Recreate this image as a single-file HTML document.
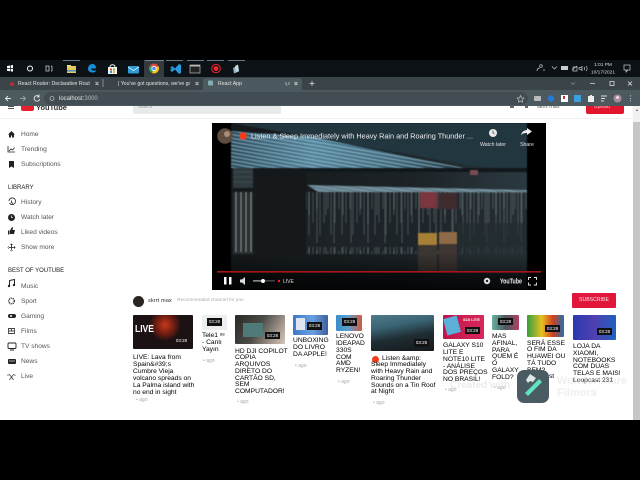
<!DOCTYPE html>
<html><head><meta charset="utf-8"><style>
*{margin:0;padding:0;box-sizing:border-box}
html,body{width:640px;height:480px;overflow:hidden;background:#000;font-family:"Liberation Sans",sans-serif}
#w{position:absolute;left:0;top:0;width:640px;height:480px;filter:blur(.3px);overflow:hidden}
.a{position:absolute;white-space:nowrap}
.s{position:absolute;left:21px;font-size:6.6px;color:#555;line-height:8px}
.h{position:absolute;left:8px;font-size:6px;color:#222;line-height:8px}
.th{position:absolute;border-radius:1px;overflow:hidden}
.d{position:absolute;background:#111;color:#fff;font-size:4.5px;width:15px;height:7.5px;line-height:7.5px;text-align:center}
.t{position:absolute;font-size:6.7px;line-height:6.75px;color:#000;white-space:pre-line}
.g{position:absolute;font-size:5px;color:#aaa;line-height:6px}
</style></head><body><div id="w">
<div class="a" style="left:0;top:60px;width:640px;height:17px;background:#0b1115"></div>
<div class="a" style="left:144px;top:60px;width:20px;height:17px;background:#333b40"></div>
<svg class="a" style="left:0;top:60px" width="640" height="17" viewBox="0 0 640 17">
<rect x="63" y="0" width="17" height=".7" fill="#8fa6b8"/><rect x="145" y="0" width="19" height=".7" fill="#8fa6b8"/><rect x="166" y="0" width="17" height=".7" fill="#8fa6b8"/><rect x="187" y="0" width="17" height=".7" fill="#8fa6b8"/><rect x="207" y="0" width="17" height=".7" fill="#8fa6b8"/><rect x="228" y="0" width="17" height=".7" fill="#8fa6b8"/>
<path d="M7 6l3-.5V8H7zM10.700 5.400L13 5V8h-2.300zM7 8.700h3v2.600l-3-.5zM10.700 8.700H13v3l-2.300-.4z" fill="#fff"/>
<circle cx="30" cy="8.500" r="2.500" fill="none" stroke="#fff" stroke-width="1"/>
<path d="M46 6h3v5h-3zM51 6h1M51 11h1M52 6v5" fill="none" stroke="#ccc" stroke-width=".8"/>
<rect x="67" y="6" width="9" height="7" fill="#e8c860"/><rect x="67" y="5" width="4" height="2" fill="#f2d878"/><rect x="67" y="10" width="9" height="1.500" fill="#4d90c0"/>
<path d="M88 9c0-3 2-5 4.500-5 2.500 0 3.500 2 3.500 4.500h-5c.2 2 2.500 2.500 4.500 1.500v2c-3 1.300-7.500.3-7.500-3z" fill="#1b8fd6"/>
<rect x="108" y="7" width="9" height="7" fill="#f5f5f5"/><path d="M110 7c0-3 5-3 5 0" fill="none" stroke="#eee"/><rect x="110" y="8.500" width="2" height="2" fill="#e04b2f"/><rect x="113" y="8.500" width="2" height="2" fill="#7db33c"/><rect x="110" y="11" width="2" height="2" fill="#2f9ad8"/><rect x="113" y="11" width="2" height="2" fill="#f0b429"/>
<rect x="128" y="6" width="11" height="7.500" rx="1" fill="#2f9ad8"/><path d="M128 7l5.500 3.500L139 7" fill="none" stroke="#d8effa" stroke-width=".8"/>
<circle cx="154" cy="8.500" r="5" fill="#dd4b3a"/><path d="M154 8.500l4.300-2.500A5 5 0 0 1 152 13z" fill="#f4c20d"/><path d="M154 8.500l-2 4.500A5 5 0 0 1 149.700 6z" fill="#2da55a"/><circle cx="154" cy="8.500" r="2.200" fill="#4a8df0" stroke="#fff" stroke-width=".8"/>
<path d="M170 8l2-2 3 2.500 4-4.500 2 1v8l-2 1-4-4.500-3 2.500-2-2 2-1.700z" fill="#2a9ae0"/>
<rect x="190" y="5" width="10" height="8" fill="#222" stroke="#bbb" stroke-width=".7"/><rect x="190" y="5" width="10" height="1.500" fill="#bbb"/>
<circle cx="216" cy="8.500" r="4.300" fill="none" stroke="#e23" stroke-width="1"/><circle cx="216" cy="8.500" r="2.500" fill="#e82a2a"/>
<path d="M233 8l5-2.500 1 6-5 2z" fill="#8db4c4"/><path d="M235 6l3-1.500 1 6-3 1.500z" fill="#c4d8e0"/>
<g fill="none" stroke="#ccc" stroke-width=".7"><circle cx="541" cy="6" r="1.300"/><path d="M537 11c0-2 1-3 3-3M543 10h2"/><path d="M552 6.500l2.500 2.500L557 6.500"/><path d="M572 10l5-4M573 7h4v4h-4z"/><path d="M582 6.500v4l-1.500-1.300h-1.500v-1.500h1.500zM584 7c1 1 1 2 0 3M586 6c1.500 1.500 1.500 3.500 0 5"/><rect x="624" y="5" width="6" height="5"/><path d="M626 10v2l2-2"/></g>
<rect x="561" y="6" width="7" height="4" fill="#ccc"/>
<text x="603" y="6" font-size="4.800" fill="#ddd" text-anchor="middle">1:01 PM</text><text x="603" y="13.500" font-size="4.800" fill="#ddd" text-anchor="middle">10/17/2021</text>
</svg>
<div class="a" style="left:0;top:77px;width:640px;height:13px;background:#3b4549"></div>
<div class="a" style="left:203px;top:78px;width:99px;height:12px;background:#4c5a5f;border-radius:3px 3px 0 0"></div>
<svg class="a" style="left:0;top:77px" width="640" height="13">
<path d="M9 7l3-2 3 3-3 1z" fill="#c03030"/><rect x="208" y="3.500" width="5" height="5" rx="1" fill="#9fd0dd" opacity=".7"/>
<g stroke="#ddd" stroke-width=".8" fill="none"><path d="M95.500 5l3 3M98.500 5l-3 3M195.500 5l3 3M198.500 5l-3 3M294.500 5l3 3M297.500 5l-3 3M590 6.500h5M628 4.500l4 4M632 4.500l-4 4M309.500 6.500h5M312 4v5"/><rect x="610" y="4.500" width="4" height="4"/><path d="M286 5v3l1.500 0M289 5v3" stroke-width=".6"/></g>
<path d="M103 2v8" stroke="#889"/>
<path d="M571 5.500l2 2 2-2" fill="none" stroke="#999" stroke-width=".6"/>
</svg>
<div class="a" style="left:18px;top:80px;font-size:5.200px;line-height:8px;color:#e4e4e4;width:72px;overflow:hidden">React Router: Declarative Routin</div>
<div class="a" style="left:118px;top:80px;font-size:5.200px;line-height:8px;color:#e4e4e4;width:72px;overflow:hidden">| You've got questions, we've got</div>
<div class="a" style="left:218px;top:80px;font-size:5.200px;line-height:8px;color:#e4e4e4">React App</div>
<div class="a" style="left:0;top:90px;width:640px;height:16px;background:#4c5a5f"></div>
<div class="a" style="left:44px;top:92px;width:484px;height:13px;border-radius:7px;background:#414d52"></div>
<svg class="a" style="left:0;top:90px" width="640" height="16" fill="none">
<g stroke="#e5e5e5" stroke-width=".9"><path d="M6 8.500h5M8 6l-2.500 2.500L8 11"/><path d="M20 8.500h5M23 6l2.500 2.500L23 11" opacity=".5"/><path d="M39 6.500a2.800 2.800 0 1 0 .7 2.500M39 4.500v2.500h-2"/><circle cx="52" cy="8.500" r="2" stroke-width=".6"/></g>
<path d="M520.500 5.500l1 2.300 2.500.3-1.900 1.700.5 2.500-2.100-1.300-2.100 1.300.5-2.500-1.900-1.700 2.500-.3z" stroke="#ccc" stroke-width=".6"/>
<rect x="534" y="6" width="7" height="5" rx="1" fill="#bbb"/><circle cx="551" cy="8.500" r="3.200" fill="#2478d8"/><rect x="561" y="5" width="7" height="7" fill="#fff"/><rect x="563" y="6" width="2" height="3" fill="#b33"/><rect x="574" y="5" width="7" height="7" fill="#39a0dc"/>
<path d="M588 6h2v-1h2v1h2v6h-6z" fill="#eee"/><path d="M601 6h6M601 8.500h4M601 11h3" stroke="#ddd"/><circle cx="617.500" cy="8.500" r="4" fill="#a88a98"/><circle cx="617.500" cy="7.500" r="1.500" fill="#e8e0e0"/>
<path d="M630.500 5.500v.8M630.500 8v.8M630.500 10.500v.8" stroke="#eee" stroke-width="1"/>
</svg>
<div class="a" style="left:59px;top:94.500px;font-size:6px;line-height:9px;color:#e8e8e8">localhost:<span style="color:#b5bcbe">3000</span></div>
<div class="a" style="left:0;top:106px;width:640px;height:314px;background:#fff;overflow:hidden">
<div class="a" style="left:8px;top:0;width:6px;height:.8px;background:#555"></div>
<div class="a" style="left:8px;top:1.500px;width:6px;height:.8px;background:#555"></div>
<div class="a" style="left:21px;top:0;width:13px;height:5px;background:#e8212a;border-radius:0 0 2px 2px"></div>
<div class="a" style="left:36px;top:-2.500px;font-size:7.500px;font-weight:bold;line-height:8px;color:#333">YouTube</div>
<div class="a" style="left:133px;top:0;width:148px;height:8px;background:#e8eaeb;border-radius:0 0 1px 1px"></div>
<div class="a" style="left:138px;top:-2px;font-size:4.500px;line-height:5px;color:#999">Search</div>
<div class="a" style="left:586px;top:0;width:38px;height:8px;background:#e4162f;border-radius:0 0 2px 2px"></div>
<div class="a" style="left:594px;top:-2px;font-size:5px;line-height:6px;color:#f4c0c0">Upload</div>
<div class="a" style="left:510px;top:0;width:4px;height:2px;background:#666"></div>
<div class="a" style="left:525px;top:0;width:3px;height:2px;background:#666"></div>
<div class="a" style="left:537px;top:-2.500px;font-size:5.500px;line-height:6px;color:#555">skrrt max</div>
<div class="a" style="left:0;top:12px;width:633px;height:.7px;background:#f0f0f0"></div>
<div class="a" style="left:633px;top:0;width:7px;height:314px;background:#c6c6c6"></div>
<div class="a" style="left:633px;top:0;width:7px;height:16px;background:#f1f1f1"></div>
<div class="a" style="left:635.500px;top:3px;width:0;height:0;border-left:1.500px solid transparent;border-right:1.500px solid transparent;border-bottom:2px solid #555"></div>
</div>
<div class="s" style="top:130.500px">Home</div>
<div class="s" style="top:145.500px">Trending</div>
<div class="s" style="top:160.500px">Subscriptions</div>
<div class="h" style="top:183.500px">LIBRARY</div>
<div class="s" style="top:199px">History</div>
<div class="s" style="top:214px">Watch later</div>
<div class="s" style="top:229px">Liked videos</div>
<div class="s" style="top:244px">Show more</div>
<div class="h" style="top:267px">BEST OF YOUTUBE</div>
<div class="s" style="top:282.500px">Music</div>
<div class="s" style="top:297.500px">Sport</div>
<div class="s" style="top:312.500px">Gaming</div>
<div class="s" style="top:327.500px">Films</div>
<div class="s" style="top:342.500px">TV shows</div>
<div class="s" style="top:357.500px">News</div>
<div class="s" style="top:372.500px">Live</div>
<svg class="a" style="left:0;top:120px" width="20" height="270" fill="#222">
<path d="M8 14.500l3.500-3.500 3.500 3.500h-1v3h-2v-2h-1v2H9v-3z"/>
<path d="M8 26v6h7M9 31l2-2 1.500 1 2-2.500" fill="none" stroke="#222" stroke-width=".8"/>
<path d="M9 41h5v7l-2.500-1.500L9 48z"/>
<path d="M9 81a3.300 3.300 0 1 1 .5 2M11.500 80.500v2l1.500 1" fill="none" stroke="#222" stroke-width=".8"/>
<circle cx="11.500" cy="97.500" r="3.500"/><path d="M11.500 95.500v2.200h1.500" stroke="#fff" stroke-width=".7" fill="none"/>
<path d="M8 110.500h1.500v4H8zM10 110.500l2-3.500 1 .5-.5 2.500H15l-1 4h-4z"/>
<path d="M8 127.100h7v.8H8zM11.100 124h.8v7h-.8zM10 125l1.500-1.500 1.500 1.500zM10 130l1.500 1.500 1.500-1.500zM9 126l-1.500 1.500 1.500 1.500zM14 126l1.500 1.500-1.500 1.500z"/>
<path d="M9.500 165.500v-5l5-1v5" fill="none" stroke="#222" stroke-width="1"/><circle cx="9" cy="166" r="1.200"/><circle cx="14" cy="165" r="1.200"/>
<circle cx="11.500" cy="181" r="2.800" fill="none" stroke="#333" stroke-width="1.400" stroke-dasharray="1.200 .8"/>
<rect x="8" y="194" width="8" height="4" rx="2"/><circle cx="11" cy="196" r="1" fill="#fff"/>
<path d="M8.500 208.500h6v5h-6zM8.500 211h6M11.500 208.500v2.500" fill="none" stroke="#444" stroke-width=".9"/>
<rect x="8" y="223" width="8" height="5.500" rx="1" fill="none" stroke="#222" stroke-width=".9"/><path d="M10 230h4" stroke="#222"/>
<rect x="8" y="239" width="8" height="5" rx="1"/><path d="M9 241h6" stroke="#fff" stroke-width=".6"/>
<path d="M9 254l2.500 3-2 3M14 254l-2.500 3 2 3M8 254.500v1.500M15 254.500v1.500" fill="none" stroke="#444" stroke-width=".8"/>
</svg>
<svg class="a" style="left:212px;top:123px" width="334" height="167" viewBox="0 0 334 167">
<defs>
<linearGradient id="r" x1="0" y1="0" x2="1" y2="0"><stop offset="0" stop-color="#2b4a5a"/><stop offset=".35" stop-color="#4f7f96"/><stop offset=".7" stop-color="#3d6476"/><stop offset="1" stop-color="#203640"/></linearGradient>
<linearGradient id="w1" x1="0" y1="0" x2="1" y2="0"><stop offset="0" stop-color="#15191b"/><stop offset=".6" stop-color="#1c2226"/><stop offset="1" stop-color="#2b3a40"/></linearGradient>
<linearGradient id="fade" x1="0" y1="0" x2="0" y2="1"><stop offset="0" stop-color="#000" stop-opacity="0"/><stop offset="1" stop-color="#000" stop-opacity=".75"/></linearGradient>
<pattern id="st" width="5" height="3.600" patternUnits="userSpaceOnUse" patternTransform="rotate(10)"><rect width="5" height="1.400" fill="#b8e0f0" opacity=".5"/></pattern>
<pattern id="dr" width="11" height="62" patternUnits="userSpaceOnUse"><path d="M2 0v38M6 4v20M9 0v50" stroke="#aebfc6" stroke-width=".7" opacity=".4"/></pattern>
<pattern id="dr2" width="17" height="62" patternUnits="userSpaceOnUse"><path d="M3 0v58M12 0v30" stroke="#c0d0d6" stroke-width=".8" opacity=".35"/></pattern>
</defs>
<rect width="334" height="167" fill="#000"/>
<g style="filter:blur(.5px)">
<rect x="19" y="0" width="296" height="167" fill="url(#w1)"/>
<path d="M19 0h296v48l-60-6z" fill="#223640"/>
<path d="M19 8L100 14L252 45H19z" fill="url(#r)"/>
<path d="M19 8L100 14L252 45H19z" fill="url(#st)"/>
<rect x="19" y="45" width="296" height="4" fill="#11171a"/>
<rect x="21" y="45" width="20" height="20" fill="#2e3a3e"/><path d="M21 49h20M21 54h20M21 59h20" stroke="#465458" stroke-width=".8"/>
<rect x="21" y="69" width="20" height="62" fill="#2c2f31"/><path d="M24 69v60M29 69v60M34 69v60M39 69v60" stroke="#9aa6aa" stroke-width=".9"/>
<path d="M44 45h50v88H44z" fill="#14181a"/>
<path d="M95 62L315 67V70L106 69z" fill="#647f8b"/>
<path d="M95 62L315 67V70L106 69z" fill="url(#st)" opacity=".5"/>
<rect x="94" y="69" width="221" height="62" fill="#1f272b" opacity=".6"/>
<rect x="94" y="69" width="221" height="62" fill="url(#dr)"/>
<rect x="94" y="69" width="221" height="62" fill="url(#dr2)"/>
<path d="M208 69h17v16h-17z" fill="#7c3640"/><path d="M227 70h18v16h-18z" fill="#3f2a2e"/><path d="M258 47h8v5h-8z" fill="#7c4a52"/>
<rect x="206" y="110" width="19" height="12" fill="#a68036"/><rect x="227" y="109" width="18" height="12" fill="#8e6a46"/>
<rect x="206" y="122" width="19" height="27" fill="#3b3632"/><rect x="227" y="121" width="18" height="28" fill="#3e3532"/>
<rect x="246" y="100" width="69" height="67" fill="#242d31" opacity=".7"/>
<rect x="19" y="130" width="296" height="37" fill="url(#fade)"/>
</g>
<rect x="0" y="149" width="334" height="18" fill="#000" opacity=".35"/>
<circle cx="13" cy="13" r="7.800" fill="#5e4c40"/><circle cx="15" cy="11" r="3" fill="#a88c78"/>
<circle cx="31" cy="13" r="3.800" fill="#f33c1a"/>
<text x="39" y="15.500" font-size="7.300" fill="#eee" textLength="222" lengthAdjust="spacingAndGlyphs">Listen &amp; Sleep Immediately with Heavy Rain and Roaring Thunder ...</text>
<circle cx="281" cy="10" r="4" fill="#e8e8e8"/><path d="M281 7.500v2.500l1.500 1" stroke="#333" stroke-width=".7" fill="none"/>
<path d="M315 7l5 3.500-5 3.500v-2c-3 0-5 .5-6 2.500.5-3.500 2.500-5 6-5.500z" fill="#eee" transform="translate(0 -2)"/>
<text x="281" y="23" font-size="5.200" fill="#e0e0e0" text-anchor="middle">Watch later</text><text x="315" y="23" font-size="5.200" fill="#e0e0e0" text-anchor="middle">Share</text>
<rect x="5" y="148" width="324" height="1.600" fill="#a8141c"/>
<path d="M12 154h2.500v7.500H12zM17 154h2.500v7.500H17z" fill="#fff"/>
<path d="M28 156.500h2l3-2.500v8l-3-2.500h-2z" fill="#ddd"/>
<rect x="41" y="157.500" width="22" height=".8" fill="#777"/><rect x="41" y="157.500" width="11" height=".8" fill="#fff"/><circle cx="51" cy="158" r="2" fill="#fff"/>
<circle cx="67" cy="158" r="1.200" fill="#e22"/><text x="71" y="159.800" font-size="5" fill="#ddd">LIVE</text>
<circle cx="275" cy="158" r="3.200" fill="#ddd"/><circle cx="275" cy="158" r="1.200" fill="#222"/>
<text x="288" y="160.500" font-size="7.200" font-weight="bold" fill="#eee" textLength="22" lengthAdjust="spacingAndGlyphs">YouTube</text>
<path d="M316.500 157v-2.500h2.500M322 154.500h2.500v2.500M324.500 159.500v2.500H322M319 162h-2.500v-2.500" stroke="#eee" stroke-width=".9" fill="none"/>
</svg>
<div class="a" style="left:133px;top:295.500px;width:11px;height:11px;border-radius:50%;background:#2a2422"></div>
<div class="a" style="left:148px;top:297px;font-size:5.800px;line-height:8px;color:#333">skrrt max</div>
<div class="a" style="left:177px;top:298px;font-size:4.800px;line-height:6px;color:#aaa">Recommended channel for you</div>
<div class="a" style="left:572px;top:293px;width:44px;height:15px;background:#e0163a;border-radius:1px;color:#fbe4e8;font-size:5.200px;line-height:15px;text-align:center">SUBSCRIBE</div>

<div class="th" style="left:133px;top:314.500px;width:60px;height:34px;background:radial-gradient(ellipse 16px 16px at 32px 10px,#c8381c,#6a1c10 60%,transparent),#1c1214"><div class="a" style="left:2px;top:10px;font-size:10px;font-weight:bold;color:#fff;line-height:10px;transform:scaleX(.85);transform-origin:0 0">LIVE</div><div class="d" style="left:41px;top:22.500px;background:#1c1214">03:28</div></div>
<div class="t" style="left:133px;top:353.600px;line-height:7px">LIVE: Lava from
Spain&amp;#39;s
Cumbre Vieja
volcano spreads on
La Palma island with
no end in sight</div>
<div class="g" style="left:136px;top:397px">• ago</div>

<div class="th" style="left:202px;top:314.500px;width:25px;height:15px;background:#eceef0"><div class="d" style="left:5px;top:3.500px">03:28</div></div>
<div class="t" style="left:202px;top:333.300px">Tele1 ᵃˢ
- Canlı
Yayın</div>
<div class="g" style="left:203px;top:358px">• ago</div>

<div class="th" style="left:235px;top:314.500px;width:50px;height:29px;background:linear-gradient(120deg,#2a2826,#4a4a46 45%,#a89a90 80%,#d8c8bc)"><div class="a" style="left:8px;top:8px;width:20px;height:14px;background:#4f7a78"></div><div class="d" style="left:30px;top:17px">03:28</div></div>
<div class="t" style="left:235px;top:348.600px">HD DJI COPILOT
COPIA
ARQUIVOS
DIRETO DO
CARTÃO SD,
SEM
COMPUTADOR!</div>
<div class="g" style="left:237px;top:399px">• ago</div>

<div class="th" style="left:293px;top:314.500px;width:35px;height:20px;background:linear-gradient(90deg,#3a78c8,#6aa0e0 55%,#3f5fa0)"><div class="a" style="left:3px;top:3px;width:9px;height:12px;background:#dfe6f0"></div><div class="d" style="left:14px;top:7.500px">03:28</div></div>
<div class="t" style="left:293px;top:338.300px">UNBOXING
DO LIVRO
DA APPLE!</div>
<div class="g" style="left:295px;top:363px">• ago</div>

<div class="th" style="left:336px;top:314.500px;width:26px;height:16px;background:linear-gradient(90deg,#3a8cc8,#5aa0d0 45%,#d05a40)"><div class="d" style="left:6px;top:3.500px">03:28</div></div>
<div class="t" style="left:336px;top:334.300px">LENOVO
IDEAPAD
330S
COM
AMD
RYZEN!</div>
<div class="g" style="left:338px;top:379px">• ago</div>

<div class="th" style="left:371px;top:314.500px;width:63px;height:36px;background:linear-gradient(170deg,#4e7a8a 0,#3a6474 30%,#1e2c32 60%,#14181c)"><div class="d" style="left:43px;top:24.500px">03:28</div></div>
<div class="a" style="left:372px;top:355.500px;width:7px;height:7px;border-radius:50%;background:#f33c1a"></div>
<div class="t" style="left:371px;top:355.600px"><span style="margin-left:11px">Listen &amp;amp:</span>
Sleep Immediately
with Heavy Rain and
Roaring Thunder
Sounds on a Tin Roof
at Night</div>
<div class="g" style="left:373px;top:400px">• ago</div>

<div class="th" style="left:443px;top:314.500px;width:41px;height:24px;background:linear-gradient(90deg,#c0144a,#d8285a)"><div class="a" style="left:2px;top:2px;width:14px;height:17px;background:#5ab0d8;transform:rotate(-15deg)"></div><div class="a" style="left:20px;top:2px;font-size:4px;line-height:5px;color:#fff;font-weight:bold">S10 LITE</div><div class="d" style="left:22px;top:12px">03:28</div></div>
<div class="t" style="left:443px;top:343.300px">GALAXY S10
LITE E
NOTE10 LITE
- ANÁLISE
DOS PREÇOS
NO BRASIL!</div>
<div class="g" style="left:445px;top:387px">• ago</div>

<div class="th" style="left:492px;top:314.500px;width:27px;height:15px;background:linear-gradient(90deg,#6ab0a0,#4a5a60 50%,#b04060)"><div class="d" style="left:6px;top:3px">03:28</div></div>
<div class="t" style="left:492px;top:334px">MAS
AFINAL,
PARA
QUEM É
O
GALAXY
FOLD?</div>
<div class="g" style="left:494px;top:385px">• ago</div>

<div class="th" style="left:527px;top:314.500px;width:37px;height:22px;background:linear-gradient(90deg,#30a040,#e8c020 40%,#d04020 70%,#2070b0)"><div class="d" style="left:18px;top:10px">03:28</div></div>
<div class="t" style="left:527px;top:340.600px">SERÁ ESSE
O FIM DA
HUAWEI OU
TÁ TUDO
BEM?
Loopcast
#11</div>
<div class="th" style="left:573px;top:314.500px;width:43px;height:25px;background:linear-gradient(90deg,#2a3ab0,#5040b0 50%,#2060c0)"><div class="d" style="left:24px;top:13px">03:28</div></div>
<div class="t" style="left:573px;top:344px">LOJA DA
XIAOMI,
NOTEBOOKS
COM DUAS
TELAS E MAIS!
Loopcast 231</div>

<div class="a" style="left:450px;top:380.500px;font-size:10px;line-height:10px;color:rgba(215,215,215,.5);font-weight:bold">Created with</div>
<div class="a" style="left:557px;top:376px;font-size:11px;line-height:11px;color:rgba(225,225,225,.55);font-weight:bold">Wondershare</div>
<div class="a" style="left:557px;top:388px;font-size:11px;line-height:11px;color:rgba(225,225,225,.55);font-weight:bold">Filmora</div>
<svg class="a" style="left:517px;top:369.500px" width="32" height="33" viewBox="0 0 32 33">
<rect width="32" height="33" rx="7" fill="#4b5b62"/>
<path d="M8 23L22 9l3 3-14 14z" fill="#5fe3c0"/>
<path d="M9 10l4-6 6 4-3 4-3-1-2 2z" fill="#dfe8e8"/>
</svg>
</div></body></html>
